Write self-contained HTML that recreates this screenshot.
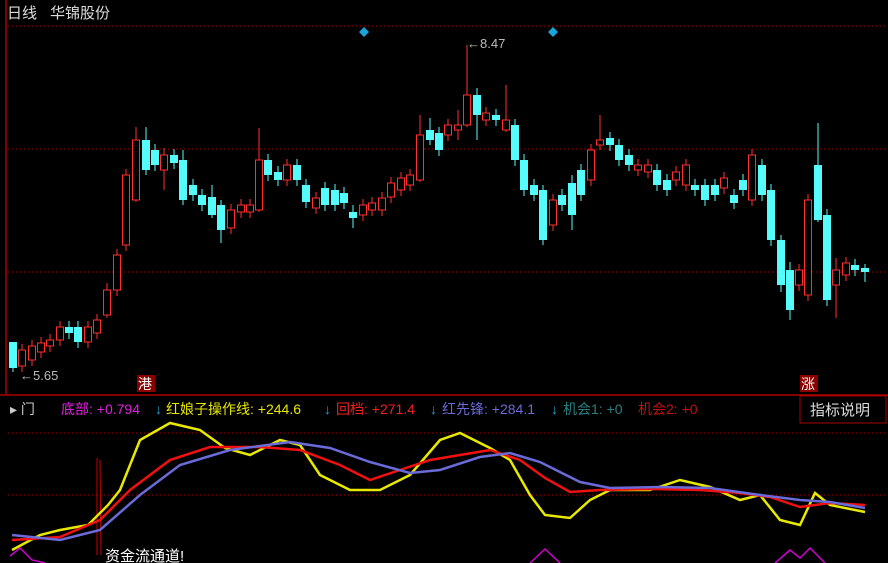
<!DOCTYPE html>
<html><head><meta charset="utf-8"><style>
html,body{margin:0;padding:0;background:#000;width:888px;height:563px;overflow:hidden;font-family:"Liberation Sans","Noto Sans CJK SC",sans-serif}
svg{position:absolute;left:0;top:0}
</style></head><body>
<svg id="s" width="888" height="563" xmlns="http://www.w3.org/2000/svg">
<rect width="888" height="563" fill="#000"/>
<line x1="6" y1="0" x2="6" y2="395" stroke="#a00" stroke-width="1.5"/>
<line x1="8" y1="26" x2="888" y2="26" stroke="#a00" stroke-dasharray="1,3"/>
<line x1="8" y1="149" x2="888" y2="149" stroke="#a00" stroke-dasharray="1,3"/>
<line x1="8" y1="272" x2="888" y2="272" stroke="#a00" stroke-dasharray="1,3"/>
<line x1="0" y1="395" x2="888" y2="395" stroke="#a00" stroke-width="1.5"/>
<line x1="8" y1="433" x2="888" y2="433" stroke="#a00" stroke-dasharray="1,3"/>
<line x1="8" y1="495" x2="888" y2="495" stroke="#a00" stroke-dasharray="1,3"/>
<text x="7" y="18" fill="#ddd" font-size="15">日线</text>
<text x="50" y="18" fill="#ddd" font-size="15">华锦股份</text>
<path d="M364 27 l5 5 -5 5 -5 -5z M553 27 l5 5 -5 5 -5 -5z" fill="#1ba3d8"/>
<text x="20" y="380" fill="#bbb" font-size="13">←5.65</text>
<text x="467" y="48" fill="#bbb" font-size="13">←8.47</text>
<rect x="137" y="375" width="18" height="17" fill="#800"/><text x="138" y="389" fill="#fff" font-size="14">港</text>
<rect x="800" y="375" width="18" height="17" fill="#800"/><text x="801" y="389" fill="#fff" font-size="14">涨</text>
<g id="c"></g>
<g font-size="14">
<text x="10" y="414" fill="#ccc">▸ 门</text>
<text x="61" y="414" fill="#e020e0">底部: +0.794</text>
<text x="155" y="414" fill="#1ba3d8">↓</text>
<text x="166" y="414" fill="#e8e800">红娘子操作线: +244.6</text>
<text x="324" y="414" fill="#1ba3d8">↓</text>
<text x="336" y="414" fill="#f02020">回档: +271.4</text>
<text x="430" y="414" fill="#1ba3d8">↓</text>
<text x="442" y="414" fill="#6a6ad8">红先锋: +284.1</text>
<text x="551" y="414" fill="#1ba3d8">↓</text>
<text x="563" y="414" fill="#2a8080">机会1: +0</text>
<text x="638" y="414" fill="#c01010">机会2: +0</text>
</g>
<rect x="800" y="396" width="86" height="27" fill="#000" stroke="#a00"/>
<text x="810" y="415" fill="#ddd" font-size="15">指标说明</text>
<line x1="97" y1="555" x2="97" y2="458" stroke="#c00"/><line x1="101" y1="555" x2="100" y2="460" stroke="#c00"/>
<polyline fill="none" stroke="#d000d0" stroke-width="1.5" points="10,556 20,548 32,560 45,563"/>
<polyline fill="none" stroke="#d000d0" stroke-width="1.5" points="530,563 545,549 560,563"/>
<polyline fill="none" stroke="#d000d0" stroke-width="1.5" points="775,563 790,550 800,558 810,548 825,563"/>
<polyline fill="none" stroke="#e8e800" stroke-width="2.5" points="12,550 40,535 60,530 88,525 108,505 120,490 140,440 170,423 200,430 225,448 250,455 280,440 300,445 320,475 350,490 380,490 410,475 440,440 460,433 490,448 510,460 530,495 545,515 570,518 590,500 610,490 650,490 680,480 710,487 740,500 760,495 780,520 800,525 815,493 830,505 865,512"/>
<polyline fill="none" stroke="#f01010" stroke-width="2.5" points="12,540 60,537 100,520 130,490 170,460 210,447 260,447 300,450 340,465 370,480 400,470 430,460 460,455 490,450 520,460 545,478 570,492 600,490 650,489 700,490 740,493 770,497 800,507 830,503 865,505"/>
<polyline fill="none" stroke="#6a6ad8" stroke-width="2.5" points="12,535 60,540 100,530 140,495 180,465 230,450 290,442 330,448 370,462 410,473 440,470 480,457 510,453 540,462 580,482 610,488 660,487 710,488 760,495 800,500 830,502 865,508"/>
<text x="105" y="561" fill="#fff" font-size="15">资金流通道!</text>
</svg>
<script>
var d=[[13,'c',342,368,342,372],[22,'r',350,366],[32,'r',346,360],[41,'r',343,352],[50,'r',340,346],[60,'r',327,340],[69,'c',327,333],[78,'c',327,342],[88,'r',327,342],[97,'r',320,333],[107,'r',290,315,283,318],[117,'r',255,290],[126,'r',175,245],[136,'r',140,200,127,202],[146,'c',140,170,127,175],[155,'c',150,165],[164,'r',155,170,148,190],[174,'c',155,163],[183,'c',160,200,150,205],[193,'c',185,195],[202,'c',195,205],[212,'c',197,215,185,218],[221,'c',205,230,200,243],[231,'r',210,228],[241,'r',205,212],[250,'r',205,212],[259,'r',160,210,128,212],[268,'c',160,175],[278,'c',172,180],[287,'r',165,180],[297,'c',165,180],[306,'c',185,202],[316,'r',198,208],[325,'c',188,205],[335,'c',190,205],[344,'c',193,203],[353,'c',212,218,205,228],[363,'r',205,215],[372,'r',203,210],[382,'r',198,210],[391,'r',183,197],[401,'r',178,190],[410,'r',175,185],[420,'r',135,180,115,182],[430,'c',130,140,118,145],[439,'c',133,150],[448,'r',125,135],[458,'r',125,130,110,140],[467,'r',95,125,45,127],[477,'c',95,115,88,140],[486,'r',113,120],[496,'c',115,120],[506,'r',120,130,85,132],[515,'c',125,160],[524,'c',160,190],[534,'c',185,195],[543,'c',190,240,185,245],[553,'r',200,225],[562,'c',195,205],[572,'c',183,215,175,230],[581,'c',170,195],[591,'r',150,180],[600,'r',140,145,115,150],[610,'c',138,145],[619,'c',145,160],[629,'c',155,165],[638,'r',165,170],[648,'r',165,172],[657,'c',170,185],[667,'c',180,190],[676,'r',172,180],[686,'r',165,185],[695,'c',185,190],[705,'c',185,200],[715,'c',185,195],[724,'r',178,188],[734,'c',195,203],[743,'c',180,190],[752,'r',155,200],[762,'c',165,195],[771,'c',190,240],[781,'c',240,285,235,292],[790,'c',270,310,262,320],[799,'r',270,285],[808,'r',200,295],[818,'c',165,220,123,222],[827,'c',215,300],[836,'r',270,285,258,318],[846,'r',263,275],[855,'c',265,270],[865,'c',268,272,264,282]];
var h='';d.forEach(function(k){var x=k[0],col=k[1]=='r'?'#ff3030':'#54fcfc',t=k[2],b=k[3],wt=k[4]||t-6,wb=k[5]||b+6;
h+='<line x1="'+x+'" y1="'+wt+'" x2="'+x+'" y2="'+wb+'" stroke="'+col+'"/>';
if(k[1]=='r')h+='<rect x="'+(x-3.5)+'" y="'+t+'" width="7" height="'+Math.max(b-t,1)+'" fill="#000" stroke="'+col+'"/>';
else h+='<rect x="'+(x-4)+'" y="'+t+'" width="8" height="'+Math.max(b-t,1)+'" fill="'+col+'"/>';});
document.getElementById('c').innerHTML=h;
</script>
</body></html>
